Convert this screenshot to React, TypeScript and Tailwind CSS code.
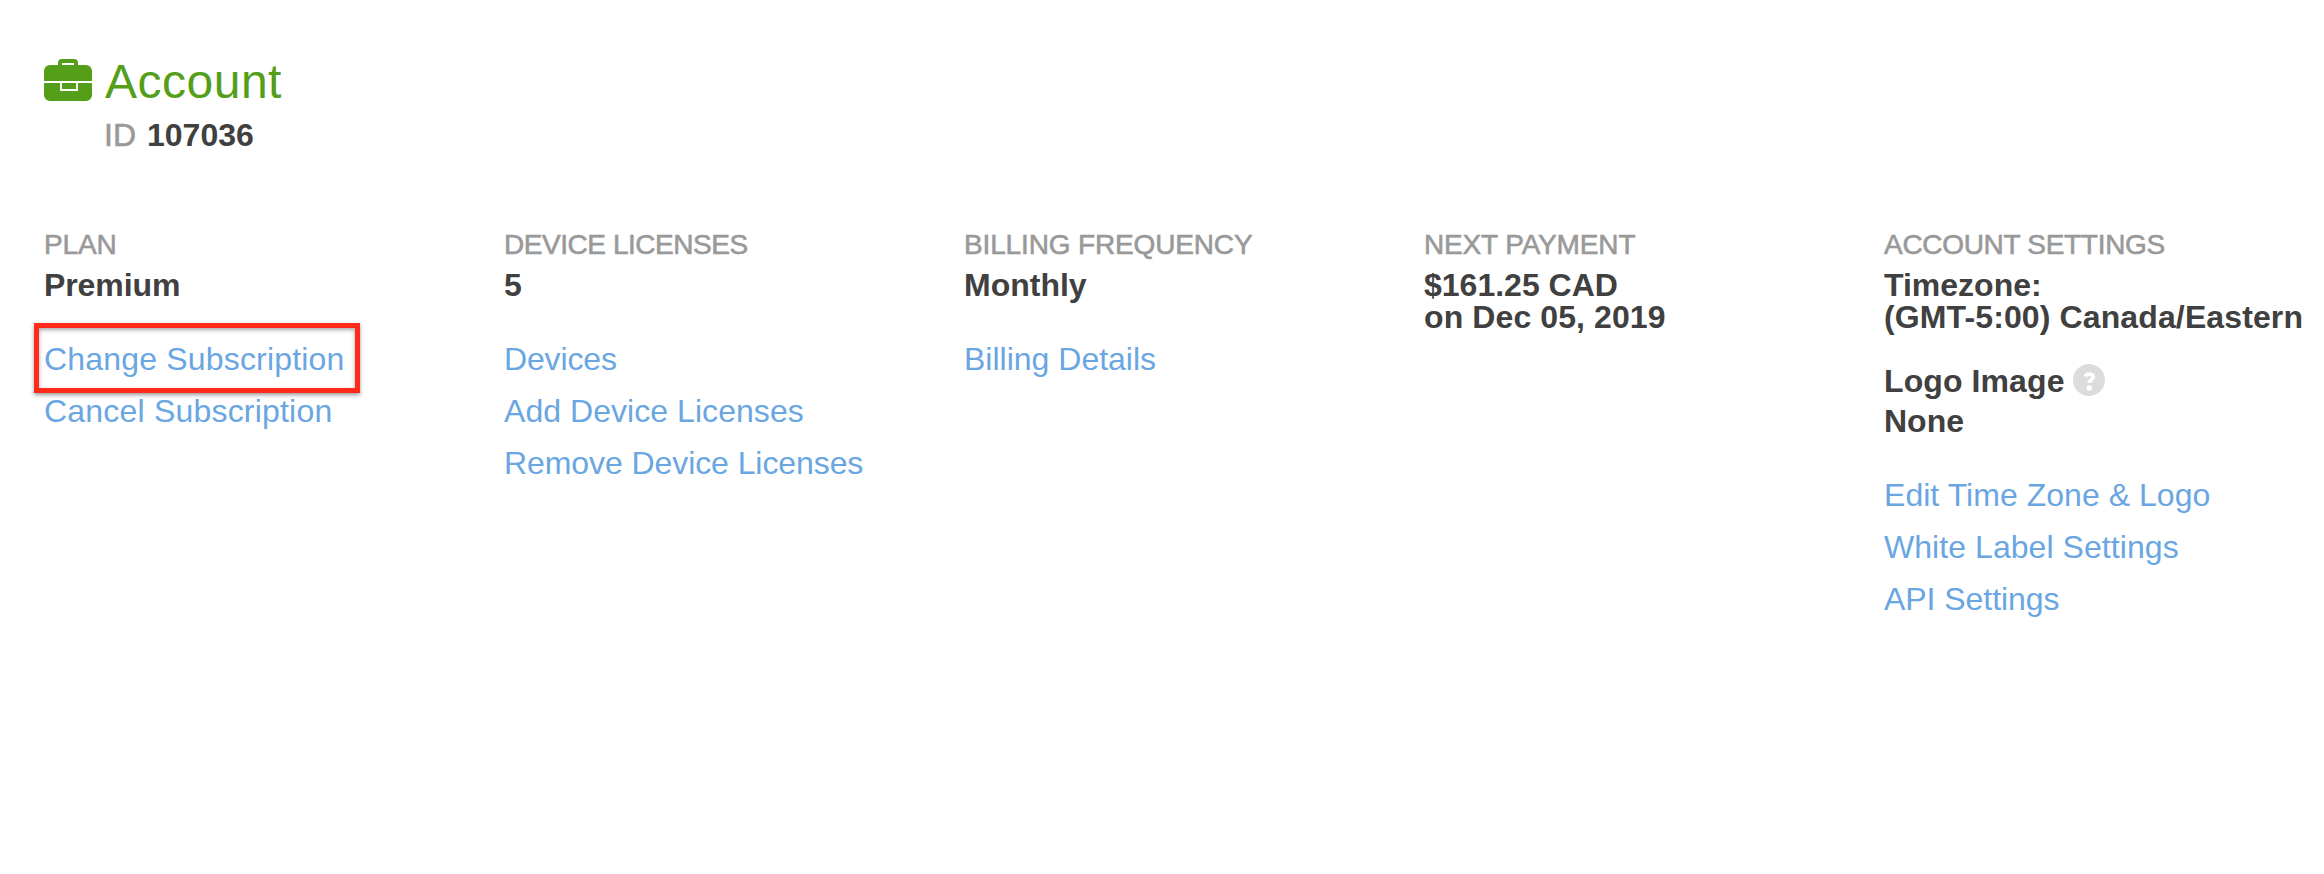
import type { ReactNode } from 'react'

type Line = { text: string; tracking: string }

type ColumnProps = {
  title: string
  titleTracking: string
  values: Line[]
  links?: Line[]
  highlighted?: string
  children?: ReactNode
}

function BriefcaseIcon() {
  return (
    <svg className="h-[42px] w-12 shrink-0" viewBox="0 0 48 42" fill="none">
      <path
        fill="#549e1a"
        fillRule="evenodd"
        d="M14 6V4a4 4 0 0 1 4-4h12a4 4 0 0 1 4 4v2h8a6 6 0 0 1 6 6v10H0V12a6 6 0 0 1 6-6h8ZM18 4v2h12V4H18Z"
      />
      <path
        fill="#549e1a"
        d="M0 24h16v8h18v-8h14v12a6 6 0 0 1-6 6H6a6 6 0 0 1-6-6V24Z"
      />
      <path fill="#549e1a" d="M18 24h14v6H18z" />
    </svg>
  )
}

function HelpIcon() {
  return (
    <svg className="ml-2 size-8 -translate-y-px" viewBox="0 0 32 32" fill="none">
      <circle cx="16" cy="16" r="16" fill="#dcdcdc" />
      <path
        d="M12.5 12.4c.5-1.6 1.9-2.3 3.7-2.3 2.3 0 3.9 1.1 3.9 2.9 0 2.7-3.8 2.7-3.8 6"
        stroke="#fff"
        strokeWidth="3.8"
      />
      <circle cx="16.2" cy="24" r="2.8" fill="#fff" />
    </svg>
  )
}

function Column({ title, titleTracking, values, links = [], highlighted, children }: ColumnProps) {
  return (
    <section className="w-[460px] shrink-0 whitespace-nowrap">
      <h2
        className={`text-[28px] leading-[30px] text-[#999] [-webkit-text-stroke:0.6px_#999] ${titleTracking}`}
      >
        {title}
      </h2>
      <div className="mt-[9px] text-[32px] leading-8 font-bold text-[#404040]">
        {values.map((line) => (
          <p key={line.text} className={line.tracking}>
            {line.text}
          </p>
        ))}
        {children}
      </div>
      <ul className="mt-8 text-[32px] leading-[52px] text-[#6aa6e2]">
        {links.map((link) => (
          <li key={link.text} className="relative">
            <a href="#" className={link.tracking}>
              {link.text}
            </a>
            {/* Marker around the highlighted link */}
            {link.text === highlighted && (
              <span className="absolute -top-[10px] -left-[10px] h-[70px] w-[326px] border-5 border-[#ff2a1a] shadow-[0_2px_4px_rgba(0,0,0,0.4),inset_0_2px_4px_rgba(0,0,0,0.35)]" />
            )}
          </li>
        ))}
      </ul>
    </section>
  )
}

export default function App() {
  return (
    <main className="h-[874px] w-full overflow-hidden bg-white pl-11 pt-[59px] font-['Liberation_Sans',sans-serif]">
      <header className="h-[171px]">
        <div className="flex h-[42px] items-center">
          <BriefcaseIcon />
          <h1 className="ml-[13px] text-[48px] leading-[47px] tracking-[0.5px] text-[#549e1a]">
            <span className="relative top-px">Account</span>
          </h1>
        </div>
        <p className="mt-[18px] ml-[60px] flex text-[32px] leading-8">
          <span className="text-[#999] [-webkit-text-stroke:0.6px_#999]">ID</span>
          <strong className="ml-[11px] text-[#404040]">107036</strong>
        </p>
      </header>

      <div className="flex">
        <Column
          title="PLAN"
          titleTracking="tracking-[-0.15px]"
          values={[{ text: 'Premium', tracking: 'tracking-[-0.1px]' }]}
          links={[
            { text: 'Change Subscription', tracking: 'tracking-[0.18px]' },
            { text: 'Cancel Subscription', tracking: 'tracking-[0.2px]' },
          ]}
          highlighted="Change Subscription"
        />
        <Column
          title="DEVICE LICENSES"
          titleTracking="tracking-[-0.45px]"
          values={[{ text: '5', tracking: 'tracking-normal' }]}
          links={[
            { text: 'Devices', tracking: 'tracking-[-0.15px]' },
            { text: 'Add Device Licenses', tracking: 'tracking-[0.05px]' },
            { text: 'Remove Device Licenses', tracking: 'tracking-[-0.08px]' },
          ]}
        />
        <Column
          title="BILLING FREQUENCY"
          titleTracking="tracking-[-0.15px]"
          values={[{ text: 'Monthly', tracking: 'tracking-normal' }]}
          links={[{ text: 'Billing Details', tracking: 'tracking-normal' }]}
        />
        <Column
          title="NEXT PAYMENT"
          titleTracking="tracking-[-0.15px]"
          values={[
            { text: '$161.25 CAD', tracking: 'tracking-normal' },
            { text: 'on Dec 05, 2019', tracking: 'tracking-[0.1px]' },
          ]}
        />
        <Column
          title="ACCOUNT SETTINGS"
          titleTracking="tracking-[-0.3px]"
          values={[
            { text: 'Timezone:', tracking: 'tracking-normal' },
            { text: '(GMT-5:00) Canada/Eastern', tracking: 'tracking-[0.12px]' },
          ]}
          links={[
            { text: 'Edit Time Zone & Logo', tracking: 'tracking-[0.04px]' },
            { text: 'White Label Settings', tracking: 'tracking-[0.06px]' },
            { text: 'API Settings', tracking: 'tracking-[-0.05px]' },
          ]}
        >
          <div className="mt-8 flex items-center">
            <span className="tracking-[0.1px]">Logo Image</span>
            <HelpIcon />
          </div>
          <p className="mt-2">None</p>
        </Column>
      </div>
    </main>
  )
}
